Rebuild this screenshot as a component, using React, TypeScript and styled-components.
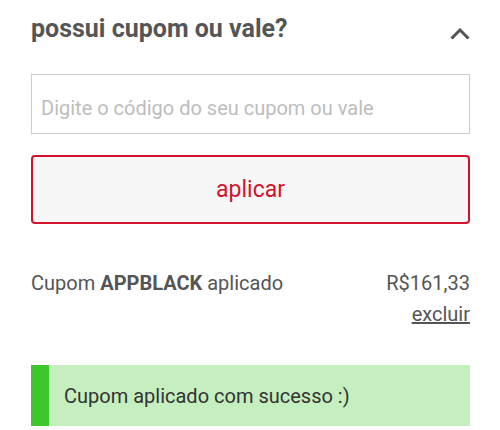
import React from 'react';
import styled, { createGlobalStyle } from 'styled-components';

const GlobalStyle = createGlobalStyle`
  body {
    margin: 0;
    background: #ffffff;
    font-family: Roboto, 'Liberation Sans', sans-serif;
  }
`;

const Page = styled.div`
  width: 500px;
  box-sizing: border-box;
  padding: 7px 30px 0 31px;
  display: flex;
  flex-direction: column;
`;

const Header = styled.div`
  display: flex;
  align-items: center;
  justify-content: space-between;
  height: 42px;
`;

const Title = styled.h2`
  margin: 0;
  font-size: 25px;
  font-weight: 700;
  color: #555555;
`;

const Toggle = styled.button`
  display: flex;
  padding: 0;
  margin: 11px 0 0;
  border: none;
  background: none;
  cursor: pointer;
`;

const CodeInput = styled.input`
  margin-top: 25px;
  height: 60px;
  box-sizing: border-box;
  border: 1px solid #cccccc;
  border-radius: 0;
  padding: 8px 9px 0;
  font-family: Roboto, 'Liberation Sans', sans-serif;
  font-size: 20px;
  color: #333333;
  outline: none;
  &::placeholder {
    color: #bdbdbd;
  }
`;

const ApplyButton = styled.button`
  margin-top: 21px;
  height: 69px;
  border: 2px solid #d3132d;
  border-radius: 4px;
  background: #f7f7f7;
  color: #d3132d;
  font-family: Roboto, 'Liberation Sans', sans-serif;
  font-size: 23px;
  cursor: pointer;
`;

const CouponRow = styled.div`
  margin-top: 47px;
  display: flex;
  justify-content: space-between;
  align-items: flex-start;
  font-size: 20px;
  color: #555555;
`;

const CouponLabel = styled.span`
  b {
    font-weight: 700;
  }
`;

const Amount = styled.div`
  display: flex;
  flex-direction: column;
  align-items: flex-end;
  gap: 7px;
`;

const Remove = styled.a`
  color: #555555;
  text-decoration: underline;
  cursor: pointer;
`;

const Notice = styled.div`
  margin-top: 39px;
  height: 61px;
  display: flex;
  align-items: center;
  background: #c6efc0;
  border-left: 18px solid #3ec82c;
  padding-left: 15px;
  font-size: 20px;
  color: #333333;
`;

const App: React.FC = () => {
  const [code, setCode] = React.useState<string>('');

  return (
    <>
      <GlobalStyle />
      <Page>
        <Header>
          <Title>possui cupom ou vale?</Title>
          <Toggle aria-label="recolher">
            <svg width="20" height="12" viewBox="0 0 20 12">
              <path d="M1.5 10.5 L10 2 L18.5 10.5" fill="none" stroke="#555555" strokeWidth="3" />
            </svg>
          </Toggle>
        </Header>
        <CodeInput
          value={code}
          onChange={(e) => setCode(e.target.value)}
          placeholder="Digite o código do seu cupom ou vale"
        />
        <ApplyButton>aplicar</ApplyButton>
        <CouponRow>
          <CouponLabel>
            Cupom <b>APPBLACK</b> aplicado
          </CouponLabel>
          <Amount>
            <span>R$161,33</span>
            <Remove>excluir</Remove>
          </Amount>
        </CouponRow>
        <Notice>Cupom aplicado com sucesso :)</Notice>
      </Page>
    </>
  );
};

export default App;
